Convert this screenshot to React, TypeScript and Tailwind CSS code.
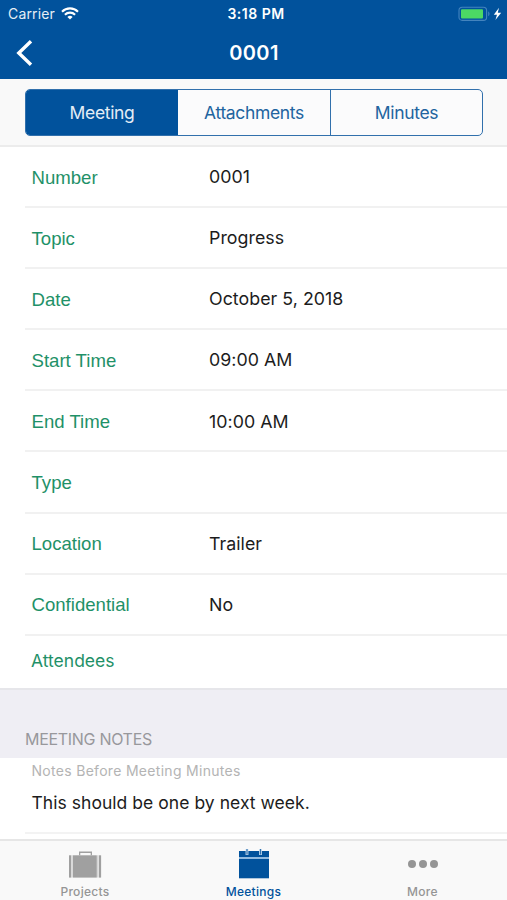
import clsx from "clsx";

const tabs = ["Meeting", "Attachments", "Minutes"];

const fields = [
  { label: "Number", value: "0001" },
  { label: "Topic", value: "Progress" },
  { label: "Date", value: "October 5, 2018" },
  { label: "Start Time", value: "09:00 AM" },
  { label: "End Time", value: "10:00 AM" },
  { label: "Type", value: "" },
  { label: "Location", value: "Trailer" },
  { label: "Confidential", value: "No" },
];

function WifiIcon() {
  return (
    <svg width="18" height="13" viewBox="0 0 18 13" fill="none" stroke="white" strokeWidth="2.1">
      <path d="M1 4.7a11.4 11.4 0 0 1 16 0" />
      <path d="M3.9 7.7a7.3 7.3 0 0 1 10.2 0" />
      <path d="M9 12.6 6.4 9.9a3.8 3.8 0 0 1 5.2 0z" fill="white" stroke="none" />
    </svg>
  );
}

function BatteryIcon() {
  return (
    <svg width="46" height="16" viewBox="0 0 46 16">
      <rect x="1" y="1.2" width="27.6" height="13.2" rx="3.2" fill="none" stroke="#4484be" strokeWidth="1.1" />
      <rect x="3" y="3.2" width="22" height="9.2" rx="1" fill="#4cd964" />
      <path d="M30.2 5.6c1.8.6 1.8 4 0 4.6z" fill="#4484be" />
      <path d="M41 1.8 35.8 8.7H39L37.4 14l5.800-7.300h-3.400z" fill="white" />
    </svg>
  );
}

function ProjectsIcon() {
  return (
    <svg width="34" height="28" viewBox="0 0 34 28" fill="#a0a0a0">
      <path d="M11 4.3V.5h13v3.8h-1.3V2H12.3v2.3z" />
      <rect x="1" y="4.3" width="2.2" height="22.3" />
      <rect x="5" y="4.3" width="23.8" height="22.3" />
      <rect x="30.9" y="4.3" width="2.2" height="22.3" />
      <path d="M4.1 4.3v22.3M29.8 4.3v22.3" stroke="#d5d5d5" strokeWidth="1.6" />
    </svg>
  );
}

function MeetingsIcon() {
  return (
    <svg width="32" height="30" viewBox="0 0 32 30">
      <rect x="1" y="2" width="30" height="27.3" fill="#01529c" />
      <path d="M1 9h30" stroke="#a3c8e8" strokeWidth="1.8" />
      <path d="M9 0v6M22.5 0v6" stroke="#c9dff2" strokeWidth="2.8" />
      <path d="M9 0v5.5M22.5 0v5.5" stroke="#3272ae" strokeWidth="1.2" />
    </svg>
  );
}

function MoreIcon() {
  return (
    <svg width="30" height="8" viewBox="0 0 30 8" fill="#959595">
      <circle cx="4" cy="4" r="4" />
      <circle cx="15" cy="4" r="4" />
      <circle cx="26" cy="4" r="4" />
    </svg>
  );
}

export default function App() {
  return (
    <div className="flex h-[900px] w-[507px] flex-col overflow-hidden bg-white font-[Inter,sans-serif] text-[#1c1c1c]">
      <header className="h-[79px] shrink-0 bg-[#01529c] text-white">
        <div className="grid h-[27px] grid-cols-3 items-center">
          <div className="flex items-center gap-[6px] pl-2 text-[14px] tracking-[0.15px]">
            <span className="opacity-90">Carrier</span>
            <WifiIcon />
          </div>
          <span className="pl-[5px] text-center text-[14px] font-semibold tracking-[0.5px]">3:18 PM</span>
          <div className="flex justify-end pr-[3px]">
            <BatteryIcon />
          </div>
        </div>
        <div className="grid h-[51px] grid-cols-3 items-center">
          <button aria-label="Back" className="pl-4">
            <svg width="18" height="28" viewBox="0 0 18 28" fill="none" stroke="white" strokeWidth="3.4">
              <path d="M15 2.2 2.8 14 15 25.8" />
            </svg>
          </button>
          <h1 className="pl-px text-center text-[20px] font-semibold tracking-[0.4px]">0001</h1>
        </div>
      </header>

      <div className="h-[68px] shrink-0 border-b-2 border-[#ececec] bg-[#f9f9f9] pt-[10px] pl-[25px]">
        <div className="grid h-[47px] w-[458px] grid-cols-[152px_152px_1fr] overflow-hidden rounded-[5px] border border-[#3170ac] bg-[#fbfbfc]">
          {tabs.map((tab, i) => (
            <button
              key={tab}
              className={clsx(
                "pt-[2px] text-[17.5px] tracking-[-0.35px]",
                i === 0 ? "bg-[#01529c] text-[#e4edf6]" : "text-[#22649f]",
                i === 2 && "border-l border-[#3170ac]"
              )}
            >
              {tab}
            </button>
          ))}
        </div>
      </div>

      <main className="flex-1">
        {fields.map((field) => (
          <div
            key={field.label}
            className="ml-[25px] flex h-[61.1px] items-center border-b-2 border-[#f1f1f1] pt-[2px] pl-[6.5px]"
          >
            <span className="w-[177.5px] font-['Liberation_Sans',sans-serif] text-[18.6px] text-[#1f9168]">
              {field.label}
            </span>
            <span className="text-[17.8px] tracking-[0.04px]">{field.value}</span>
          </div>
        ))}
        <div className="flex h-[52px] items-center pb-[2px] pl-[31px] text-[17.5px] text-[#1f9168]">Attendees</div>

        <div className="flex h-[70px] items-end border-t-2 border-[#e6e6ea] bg-[#efeef4] pb-[7px] pl-[25px] text-[16px] tracking-[-0.3px] text-[#98989c]">
          MEETING NOTES
        </div>
        <div className="ml-[25px] h-[76px] border-b-2 border-[#f3f3f3] pt-[3px] pl-[6.5px]">
          <p className="text-[14px] leading-5 tracking-[0.3px] text-[#b4b4b4]">Notes Before Meeting Minutes</p>
          <p className="mt-[10px] text-[17.5px] leading-6 tracking-[0.04px]">This should be one by next week.</p>
        </div>
      </main>

      <nav className="grid h-[61px] shrink-0 grid-cols-3 border-t-2 border-[#e6e6e6] bg-[#f9f9f9] text-[12px] font-medium tracking-[0.3px] text-[#959595]">
        <div className="flex flex-col items-center justify-end gap-[5px] pb-px">
          <ProjectsIcon />
          <span className="pl-px leading-[15px]">Projects</span>
        </div>
        <div className="flex flex-col items-center justify-end gap-[5px] pb-px text-[#01529c]">
          <MeetingsIcon />
          <span className="leading-[15px]">Meetings</span>
        </div>
        <div className="flex flex-col items-center justify-end gap-4 pb-px">
          <MoreIcon />
          <span className="leading-[15px]">More</span>
        </div>
      </nav>
    </div>
  );
}
